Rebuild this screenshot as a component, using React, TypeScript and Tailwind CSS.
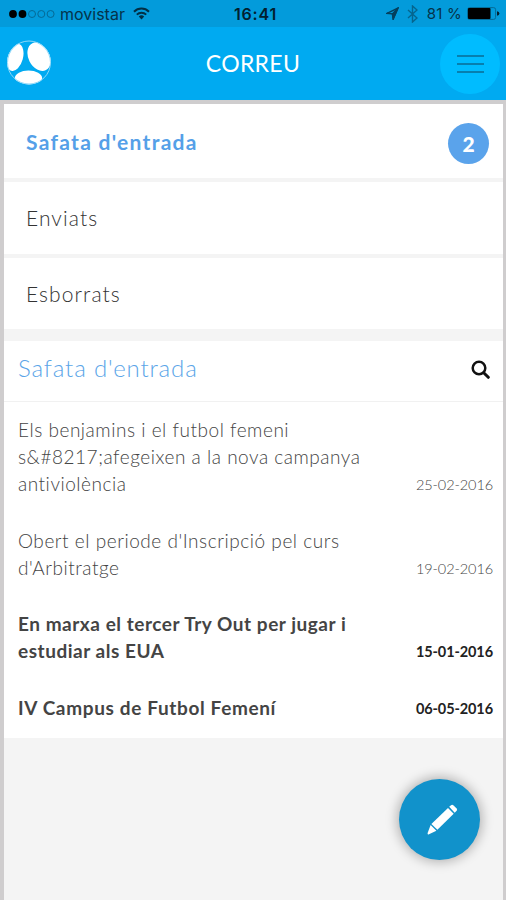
import React from "react";

interface Mail {
  lines: string[];
  tracking: string;
  date: string;
  unread: boolean;
}

const mails: Mail[] = [
  {
    lines: ["Els benjamins i el futbol femeni", "s&#8217;afegeixen a la nova campanya", "antiviolència"],
    tracking: "tracking-[0.53px]",
    date: "25-02-2016",
    unread: false,
  },
  {
    lines: ["Obert el periode d'Inscripció pel curs", "d'Arbitratge"],
    tracking: "tracking-[0.54px]",
    date: "19-02-2016",
    unread: false,
  },
  {
    lines: ["En marxa el tercer Try Out per jugar i", "estudiar als EUA"],
    tracking: "tracking-[0.53px]",
    date: "15-01-2016",
    unread: true,
  },
  {
    lines: ["IV Campus de Futbol Femení"],
    tracking: "tracking-[0.64px]",
    date: "06-05-2016",
    unread: true,
  },
];

const StatusBar: React.FC = () => (
  <div className="relative flex h-[27px] items-center justify-between bg-[#039bdb] pr-[6px] pl-[9px] font-['Inter',sans-serif] text-[16px] text-[#05334a]">
    <div className="flex items-center">
      <svg width="47" height="10" viewBox="0 0 47 10">
        <circle cx="4" cy="5" r="3.9" fill="#000" />
        <circle cx="13.5" cy="5" r="3.9" fill="#000" />
        <g fill="none" stroke="#056a96" strokeWidth="1">
          <circle cx="23" cy="5" r="3.5" />
          <circle cx="32.3" cy="5" r="3.5" />
          <circle cx="41.6" cy="5" r="3.5" />
        </g>
      </svg>
      <span className="ml-[4px]">movistar</span>
      <svg className="ml-[8px]" width="17" height="13" viewBox="0 0 17 13" fill="none" stroke="#022f45" strokeWidth="2">
        <path d="M1 4.7a10.6 10.6 0 0 1 15 0" />
        <path d="M3.8 7.6a6.7 6.7 0 0 1 9.4 0" />
        <path d="M5.8 9.6a3.8 3.8 0 0 1 5.4 0L8.5 12.5z" fill="#022f45" stroke="none" />
      </svg>
    </div>
    <span className="absolute left-[234px] font-semibold tracking-[0.8px] text-[#02202f]">16:41</span>
    <div className="flex items-center">
      <svg width="13" height="13" viewBox="0 0 13 13" fill="none" stroke="#05405d" strokeWidth="1.4">
        <path d="M1 6.3L12 1L7.2 12L6.4 6.9z" />
        <path d="M6.4 6.9L12 1L7.2 12z" fill="#05405d" />
      </svg>
      <svg className="ml-[8px]" width="11" height="18" viewBox="0 0 11 18" fill="none" stroke="#05658e" strokeWidth="1.4">
        <path d="M1 5l9 8-4.5 4V1L10 5l-9 8" />
      </svg>
      <span className="mt-px ml-[9px] text-[15px] tracking-[0.2px]">81 %</span>
      <svg className="ml-[5px]" width="33" height="13" viewBox="0 0 33 13">
        <rect x="0.6" y="0.6" width="28" height="11.8" rx="2" fill="none" stroke="#056a96" />
        <rect x="1" y="1" width="22.5" height="11" rx="1" fill="#000" />
        <path d="M30 4.2q2.4 0.3 2.4 2.3t-2.4 2.3z" fill="#03202f" />
      </svg>
    </div>
  </div>
);

const Header: React.FC = () => (
  <header className="flex h-[73px] items-center justify-between bg-[#00aaf1] px-[6px]">
    <svg className="mb-[2px]" width="46" height="46" viewBox="0 0 46 46">
      <clipPath id="ball">
        <circle cx="23" cy="22.5" r="22" />
      </clipPath>
      <g clipPath="url(#ball)" fill="#fff">
        <ellipse cx="9" cy="17.3" rx="8" ry="14" transform="rotate(15 9 17.3)" />
        <ellipse cx="33.2" cy="16.6" rx="10.8" ry="15" transform="rotate(-27 33.2 16.6)" />
        <ellipse cx="22.5" cy="38" rx="13.6" ry="7.6" />
      </g>
      <circle cx="23" cy="22.5" r="21.5" fill="none" stroke="#8fd8f9" strokeWidth="1" />
    </svg>
    <h1 className="ml-[14px] text-[23px] tracking-[0.3px] text-white">CORREU</h1>
    <button className="flex size-[60px] flex-col items-center justify-center gap-[6px] rounded-full bg-[#00bcff]">
      <span className="h-[2px] w-[27px] bg-[#077fae]" />
      <span className="h-[2px] w-[27px] bg-[#077fae]" />
      <span className="h-[2px] w-[27px] bg-[#077fae]" />
    </button>
  </header>
);

const Folders: React.FC = () => (
  <nav className="flex flex-col gap-[4px] text-[21px] text-[#333]">
    <div className="flex h-[74px] items-center justify-between bg-white pr-[14px] pl-[22px]">
      <span className="mt-[2px] font-bold tracking-[1.3px] text-[#55a0e8]">Safata d'entrada</span>
      <span className="mt-[5px] flex size-[41px] items-center justify-center rounded-full bg-[#5aa3eb] text-[21px] font-black text-white">
        2
      </span>
    </div>
    <div className="flex h-[72px] items-center bg-white pl-[22px] font-light">
      <span className="tracking-[1.1px]">Enviats</span>
    </div>
    <div className="flex h-[71px] items-center bg-white pl-[22px] font-light">
      <span className="tracking-[1.1px]">Esborrats</span>
    </div>
  </nav>
);

const Inbox: React.FC = () => (
  <section className="mt-[12px] h-[397px] bg-white">
    <div className="flex h-[61px] items-center justify-between border-b border-[#f1f1f1] pr-[13px] pl-[14px]">
      <h2 className="mb-[6px] text-[24px] font-light tracking-[0.85px] text-[#5ba5e8]">Safata d'entrada</h2>
      <svg className="mb-[3px]" width="19" height="19" viewBox="0 0 19 19" fill="none" stroke="#111">
        <circle cx="8" cy="8" r="6.3" strokeWidth="2.5" />
        <path d="M12.7 12.7l4.6 4.6" strokeWidth="3" strokeLinecap="round" />
      </svg>
    </div>
    <ul className="flex flex-col gap-[29.6px] pt-[14px] pr-[10px] pl-[14px]">
      {mails.map((mail) => (
        <li
          key={mail.date}
          className={
            mail.unread
              ? "flex items-end justify-between font-bold text-[#444]"
              : "flex items-end justify-between font-light text-[#444]"
          }
        >
          <p className={`text-[19px] leading-[27px] whitespace-nowrap ${mail.tracking}`}>
            {mail.lines.map((line) => (
              <span key={line} className="block">
                {line}
              </span>
            ))}
          </p>
          <time
            className={
              mail.unread
                ? "text-[14.5px] leading-[24px] tracking-[-0.1px] text-[#222]"
                : "text-[14.5px] leading-[24px] tracking-[-0.1px]"
            }
          >
            {mail.date}
          </time>
        </li>
      ))}
    </ul>
  </section>
);

export default function App() {
  return (
    <div className="relative h-[900px] w-[506px] overflow-hidden bg-[#f4f4f4] font-['Lato',sans-serif]">
      <StatusBar />
      <Header />
      <main className="h-[800px] border-t-4 border-r-[3px] border-l-4 border-[#cfcdce]">
        <Folders />
        <Inbox />
      </main>
      <button className="absolute top-[779px] left-[399px] flex size-[81px] items-center justify-center rounded-full bg-[#1192cb] shadow-[0_0_12px_2px_rgba(0,0,0,0.28)]">
        <svg className="ml-[5px]" width="32" height="32" viewBox="0 0 32 32" fill="#fff">
          <path d="M23.2 2.8L25 1.2q1.2-1 2.6 0.2l3 3q1 1.2 0 2.4l-1.9 1.9z" />
          <path d="M22 3.9l5.7 5.9L11.4 25.8L5.4 20z" />
          <path d="M4.6 21l5.8 5.7L3 30.2q-2 0.7-1.3-1.4z" />
        </svg>
      </button>
    </div>
  );
}
